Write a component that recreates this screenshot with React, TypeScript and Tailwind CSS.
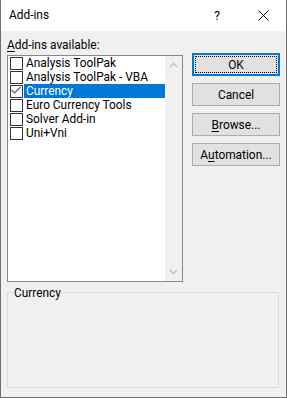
import React from "react";

const items = [
  { name: "Analysis ToolPak", checked: false },
  { name: "Analysis ToolPak - VBA", checked: false },
  { name: "Currency", checked: true },
  { name: "Euro Currency Tools", checked: false },
  { name: "Solver Add-in", checked: false },
  { name: "Uni+Vni", checked: false },
];

function Chevron({ down }: { down?: boolean }) {
  return (
    <svg width="9" height="6" viewBox="0 0 9 6" className={down ? "rotate-180" : ""}>
      <path d="M1 5 L4.5 1.5 L8 5" fill="none" stroke="#bfbfbf" strokeWidth="1.4" />
    </svg>
  );
}

function Button({ children, main }: { children: React.ReactNode; main?: boolean }) {
  if (main) {
    return (
      <div className="relative h-[23px] w-[88px] border-2 border-[#0078d7] bg-[#e1e1e1] flex items-center justify-center">
        <div className="absolute inset-[1px] border border-dotted border-black" />
        <span>{children}</span>
      </div>
    );
  }
  return (
    <div className="h-[23px] w-[88px] border border-[#adadad] bg-[#e1e1e1] flex items-center justify-center">
      {children}
    </div>
  );
}

export default function App() {
  return (
    <div
      className="w-[287px] h-[398px] border-x border-b border-[#707070] bg-[#f0f0f0] flex flex-col text-[11.9px] leading-[16px] text-black"
      style={{ fontFamily: 'Roboto, "Noto Sans", sans-serif' }}
    >
      <div className="h-[31px] bg-white flex items-start">
        <div className="flex-1 pl-[8px] pt-[7px]">Add-ins</div>
        <div className="w-[46px] h-full flex items-center justify-center">?</div>
        <div className="w-[46px] h-full flex items-center justify-center">
          <svg width="11" height="11" viewBox="0 0 11 11">
            <path d="M0.5 0.5 L10.5 10.5 M10.5 0.5 L0.5 10.5" stroke="#000" strokeWidth="1" />
          </svg>
        </div>
      </div>

      <div className="flex flex-col px-[6px] pt-[5px]">
        <div className="flex gap-[9px]">
          <div className="flex flex-col w-[176px]">
            <div className="pt-[1px] h-[16px]">
              <u className="underline-offset-2">A</u>dd-ins available:
            </div>
            <div className="mt-[3px] h-[227px] border border-[#828790] bg-white flex">
              <div className="flex-1 flex flex-col">
                {items.map((it) => (
                  <div key={it.name} className="h-[14px] flex items-start">
                    <div className="ml-[2px] mt-[1px] w-[13px] h-[13px] border border-[#333333] bg-white">
                      {it.checked && (
                        <svg width="11" height="11" viewBox="0 0 11 11">
                          <path d="M0.5 4 L3.5 7 L9.5 1" fill="none" stroke="#5a5a5a" strokeWidth="1.1" />
                        </svg>
                      )}
                    </div>
                    <div
                      className={
                        "ml-[1px] flex-1 h-[14px] leading-[14px] pl-[2px] whitespace-nowrap " +
                        (it.checked ? "bg-[#0078d7] text-white" : "")
                      }
                    >
                      {it.name}
                    </div>
                  </div>
                ))}
              </div>
              <div className="w-[17px] bg-[#f0f0f0] flex flex-col items-center justify-between pt-[6px] pb-[6px]">
                <Chevron />
                <Chevron down />
              </div>
            </div>
          </div>

          <div className="flex flex-col gap-[7px] mt-[17px]">
            <Button main>OK</Button>
            <Button>Cancel</Button>
            <Button>
              <span>
                <u className="underline-offset-2">B</u>rowse...
              </span>
            </Button>
            <Button>
              <span>
                A<u className="underline-offset-2">u</u>tomation...
              </span>
            </Button>
          </div>
        </div>

        <div className="relative mt-[10px] mr-[1px] h-[96px] border border-[#dcdcdc]">
          <span className="absolute left-[5px] top-[-8px] bg-[#f0f0f0] px-[1px]">Currency</span>
        </div>
      </div>
    </div>
  );
}
